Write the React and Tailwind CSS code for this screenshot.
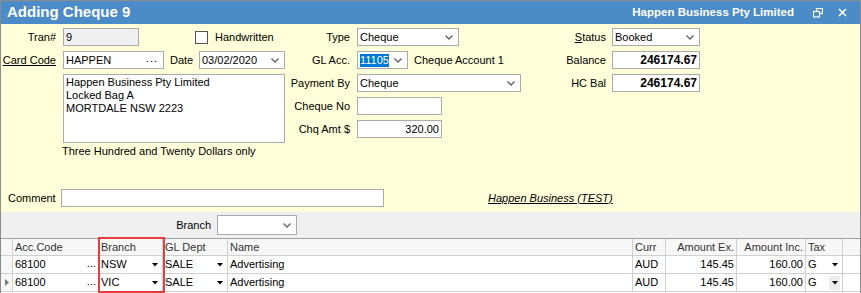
import React from "react";

function Chevron() {
  return (
    <svg width="8" height="5" viewBox="0 0 8 5" className="shrink-0">
      <polyline points="0.5,0.5 4,4 7.5,0.5" fill="none" stroke="#606060" strokeWidth="1.3" />
    </svg>
  );
}

function Caret() {
  return (
    <svg width="6" height="4" viewBox="0 0 6 4" className="shrink-0">
      <polygon points="0,0 6,0 3,3.5" fill="#000" />
    </svg>
  );
}

function Box({ className = "", bg = "bg-white", children }) {
  return (
    <div className={`h-[18px] border border-[#ababab] ${bg} flex items-center px-[2px] ${className}`}>
      {children}
    </div>
  );
}

function Select({ className = "", value }) {
  return (
    <Box className={`justify-between pr-[5px] ${className}`}>
      <span>{value}</span>
      <Chevron />
    </Box>
  );
}

const cols = [
  { w: "w-[86px]", label: "Acc.Code" },
  { w: "w-[64px]", label: "Branch" },
  { w: "w-[65px]", label: "GL Dept" },
  { w: "w-[405px]", label: "Name" },
  { w: "w-[33px]", label: "Curr" },
  { w: "w-[71px]", label: "Amount Ex.", right: true },
  { w: "w-[69px]", label: "Amount Inc.", right: true },
  { w: "w-[37px]", label: "Tax" },
];

const rows = [
  { branch: "NSW", current: false },
  { branch: "VIC", current: true },
];

export default function App() {
  return (
    <div
      className="w-[861px] h-[293px] overflow-hidden bg-white text-[11px] text-black"
      style={{ fontFamily: '"Liberation Sans", Arial, sans-serif' }}
    >
      <div className="relative h-[293px] border-x border-t border-[#8c8c8c] flex flex-col">
        {/* Title bar */}
        <div className="h-[23px] bg-[#4b8bc7] flex items-center text-white font-bold shrink-0">
          <span className="pl-[6px] text-[15px]">Adding Cheque 9</span>
          <span className="ml-auto text-[11.5px]">Happen Business Pty Limited</span>
          <svg width="10" height="10" viewBox="0 0 10 10" className="ml-[19px]">
            <rect x="3.5" y="0.5" width="6" height="5" fill="none" stroke="#fff" strokeWidth="1.2" />
            <rect x="0.5" y="3.5" width="6" height="5.5" fill="#4b8bc7" stroke="#fff" strokeWidth="1.2" />
          </svg>
          <svg width="9" height="9" viewBox="0 0 9 9" className="ml-[15px] mr-[13px]">
            <path d="M1 1 L8 8 M8 1 L1 8" stroke="#fff" strokeWidth="1.6" />
          </svg>
        </div>

        {/* Form */}
        <div className="h-[188px] bg-[#ffffd9] pt-[4px] shrink-0">
          <div className="flex h-[161px]">
            {/* Left column */}
            <div className="w-[289px] flex flex-col gap-[5px]">
              <div className="flex items-center h-[18px]">
                <span className="w-[55px] text-right">Tran#</span>
                <Box className="ml-[7px] w-[76px]" bg="bg-[#f0f0f0]">9</Box>
                <div className="ml-[56px] w-[13px] h-[13px] border border-[#555] bg-white" />
                <span className="ml-[7px]">Handwritten</span>
              </div>
              <div className="flex items-center h-[18px]">
                <span className="w-[55px] text-right underline">Card Code</span>
                <Box className="ml-[7px] w-[101px] justify-between pr-[5px]">
                  <span>HAPPEN</span>
                  <span className="tracking-[1px] leading-none pb-[4px]">...</span>
                </Box>
                <span className="w-[35px] pl-[6px]">Date</span>
                <Select className="w-[86px]" value="03/02/2020" />
              </div>
              <div className="ml-[62px] w-[222px] h-[69px] border border-[#ababab] bg-white px-[2px] pt-[1px] leading-[13px]">
                <div>Happen Business Pty Limited</div>
                <div>Locked Bag A</div>
                <div>MORTDALE NSW 2223</div>
              </div>
              <div className="ml-[61px] -mt-[3px] leading-[13px]">Three Hundred and Twenty Dollars only</div>
            </div>

            {/* Middle column */}
            <div className="w-[271px] flex flex-col gap-[5px]">
              <div className="flex items-center h-[18px]">
                <span className="w-[60px] text-right">Type</span>
                <Select className="ml-[7px] w-[102px]" value="Cheque" />
              </div>
              <div className="flex items-center h-[18px]">
                <span className="w-[60px] text-right">GL Acc.</span>
                <Box className="ml-[7px] w-[51px] justify-between pr-[5px]">
                  <span className="bg-[#0078d7] text-white leading-[13px]">11105</span>
                  <Chevron />
                </Box>
                <span className="ml-[6px]">Cheque Account 1</span>
              </div>
              <div className="flex items-center h-[18px]">
                <span className="w-[60px] text-right">Payment By</span>
                <Select className="ml-[7px] w-[164px]" value="Cheque" />
              </div>
              <div className="flex items-center h-[18px]">
                <span className="w-[60px] text-right">Cheque No</span>
                <Box className="ml-[7px] w-[85px]" />
              </div>
              <div className="flex items-center h-[18px]">
                <span className="w-[60px] text-right">Chq Amt $</span>
                <Box className="ml-[7px] w-[85px] justify-end">320.00</Box>
              </div>
            </div>

            {/* Right column */}
            <div className="flex flex-col gap-[5px]">
              <div className="flex items-center h-[18px]">
                <span className="w-[45px] text-right">
                  <span className="underline">S</span>tatus
                </span>
                <Select className="ml-[6px] w-[88px]" value="Booked" />
              </div>
              <div className="flex items-center h-[18px]">
                <span className="w-[45px] text-right">Balance</span>
                <Box className="ml-[6px] w-[88px] justify-end font-bold text-[12px]">246174.67</Box>
              </div>
              <div className="flex items-center h-[18px]">
                <span className="w-[45px] text-right">HC Bal</span>
                <Box className="ml-[6px] w-[88px] justify-end font-bold text-[12px]">246174.67</Box>
              </div>
            </div>
          </div>

          {/* Comment */}
          <div className="flex items-center h-[18px]">
            <span className="w-[60px] pl-[7px]">Comment</span>
            <Box className="w-[323px]" />
            <span className="ml-[104px] italic underline text-[11px]">Happen Business (TEST)</span>
          </div>
        </div>

        {/* Branch filter */}
        <div className="h-[26px] bg-[#f0f0f0] flex items-center shrink-0">
          <span className="w-[210px] text-right">Branch</span>
          <Select className="ml-[6px] w-[80px] h-[20px]" value="" />
        </div>

        {/* Grid */}
        <div className="flex-1 bg-white border-t border-[#a0a0a0]">
          <div className="flex h-[17px] bg-[#f7f7f7] border-b border-[#d0d0d0] text-[#333]">
            <div className="w-[12px] border-r border-[#d0d0d0]" />
            {cols.map((c) => (
              <div
                key={c.label}
                className={`${c.w} border-r border-[#d0d0d0] flex items-center px-[2px] ${c.right ? "justify-end" : ""}`}
              >
                {c.label}
              </div>
            ))}
          </div>
          {rows.map((r) => (
            <div key={r.branch} className="flex h-[18px] border-b border-[#d0d0d0]">
              <div className="w-[12px] border-r border-[#d0d0d0] bg-[#f7f7f7] flex items-center justify-center">
                {r.current && (
                  <svg width="4" height="7" viewBox="0 0 4 7">
                    <polygon points="0,0 4,3.5 0,7" fill="#777" />
                  </svg>
                )}
              </div>
              <div className="w-[86px] border-r border-[#d0d0d0] flex items-center justify-between px-[2px]">
                <span>68100</span>
                <span className="leading-none pb-[3px]">...</span>
              </div>
              <div className="w-[64px] border-r border-[#d0d0d0] flex items-center justify-between pl-[2px] pr-[4px]">
                <span>{r.branch}</span>
                <Caret />
              </div>
              <div className="w-[65px] border-r border-[#d0d0d0] flex items-center justify-between pl-[2px] pr-[4px]">
                <span>SALE</span>
                <Caret />
              </div>
              <div className="w-[405px] border-r border-[#d0d0d0] flex items-center px-[2px]">Advertising</div>
              <div className="w-[33px] border-r border-[#d0d0d0] flex items-center px-[2px]">AUD</div>
              <div className="w-[71px] border-r border-[#d0d0d0] flex items-center justify-end px-[2px]">145.45</div>
              <div className="w-[69px] border-r border-[#d0d0d0] flex items-center justify-end px-[2px]">160.00</div>
              <div className="w-[37px] border-r border-[#d0d0d0] flex items-center justify-between pl-[2px] pr-[2px]">
                <span>G</span>
                <span className={`w-[11px] h-[14px] flex items-center justify-center ${r.current ? "bg-[#ececec]" : ""}`}>
                  <Caret />
                </span>
              </div>
            </div>
          ))}
        </div>

        {/* Highlight around Branch column */}
        <div className="absolute left-[97px] top-[236px] w-[67px] h-[56px] border-2 border-[#e53e3e] pointer-events-none" />
      </div>
    </div>
  );
}
